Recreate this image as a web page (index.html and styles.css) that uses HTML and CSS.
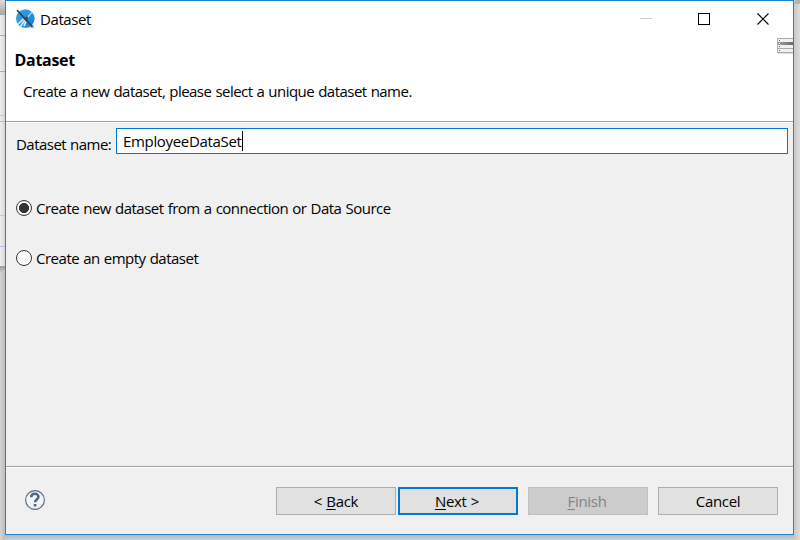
FILE: index.html
```html
<!DOCTYPE html>
<html lang="en">
<head>
<meta charset="utf-8">
<title>Dataset</title>
<link rel="stylesheet" href="styles.css">
</head>
<body>
<main class="window">
  <header class="header">
    <div class="titlebar">
      <svg class="app-icon" width="20" height="20" viewBox="0 0 20 20">
        <defs><linearGradient id="blue" x1="0" y1="0" x2="1" y2="1"><stop offset="0" stop-color="#3ba6ea"/><stop offset="1" stop-color="#0f80d2"/></linearGradient></defs>
        <path d="M13 18.5 19.5 19.5 18 15Z" fill="#c4c0bc"/>
        <circle cx="10.3" cy="9.6" r="9.3" fill="url(#blue)"/>
        <path d="M2.2 16 8.5 9.8M5.2 17.8 9.8 11.2M9 17.3 11 12.4" stroke="#d5eefc" stroke-width="1.7" fill="none"/>
        <path d="M12 9 17 3.2" stroke="#a5daf7" stroke-width="1.2"/>
        <path d="M2 1.2 17.5 17.8" stroke="#3b444c" stroke-width="1.7"/>
        <path d="M8.4 9.6 13 7.3 12.4 11.8Z" fill="#33424e"/>
      </svg>
      <span class="window-title">Dataset</span>
      <svg class="controls" width="132" height="14" viewBox="0 0 132 14" fill="none">
        <path d="M1 6.5h12" stroke="#ccc"/>
        <rect x="59.5" y="1.5" width="11" height="11" stroke="#000"/>
        <path d="M118.5 1.5l11 11m0-11-11 11" stroke="#000" stroke-width="1.1"/>
      </svg>
    </div>
    <h1>Dataset</h1>
    <p>Create a new dataset, please select a unique dataset name.</p>
    <svg class="banner-icon" width="16" height="16" viewBox="0 0 16 16">
      <defs><linearGradient id="row" x1="0" x2="1"><stop stop-color="#a2a2a2"/><stop offset="1" stop-color="#686868"/></linearGradient></defs>
      <path d="M0 0h16v15H0z" fill="#aaa"/>
      <path d="M1 1h15v3H1zM1 7h15v3H1zM1 11h15v3H1z" fill="#f2f2f2"/>
      <path d="M1 4h15v3H1z" fill="url(#row)"/>
      <path d="M2 2h1v1H2zM2 8h1v1H2zM2 12h1v1H2z" fill="#666"/>
      <path d="M2 5h1v1H2z" fill="#fff"/><path d="M1 15h15v1H1z" fill="#ddd"/>
    </svg>
  </header>
  <section class="content">
    <div class="name-row">
      <span class="name-label">Dataset name:</span>
      <div class="field"><span class="value">EmployeeDataSet</span><i class="caret"></i></div>
    </div>
    <div class="option first"><span class="radio checked"></span><span>Create new dataset from a connection or Data Source</span></div>
    <div class="option"><span class="radio"></span><span>Create an empty dataset</span></div>
  </section>
  <footer class="footer">
    <svg class="help" width="20" height="20" viewBox="0 0 20 20" fill="none" stroke="#526786">
      <circle cx="10" cy="10" r="9.4" fill="#f3f4f6" stroke-width="1.1"/>
      <path d="M6.2 7.2C6.2 2.7 13.4 2.8 13.4 6.8c0 2.7-3.3 2.6-3.3 5.5" stroke-width="2.6"/>
      <path d="M8.7 14h2.7v2.5H8.7z" fill="#526786" stroke="none"/>
    </svg>
    <div class="buttons">
      <div class="button"><span>&lt; <u>B</u>ack</span></div>
      <div class="button primary"><span><u>N</u>ext &gt;</span></div>
      <div class="button disabled"><span><u>F</u>inish</span></div>
      <div class="button cancel"><span>Cancel</span></div>
    </div>
  </footer>
</main>
</body>
</html>
```
FILE: styles.css
```css
* { box-sizing: border-box; }
body {
  margin: 0;
  width: 800px;
  height: 540px;
  overflow: hidden;
  padding-left: 5px;
  background:
    linear-gradient(#b5b5b5, #b5b5b5) 795px 0 / 5px 4px no-repeat,
    linear-gradient(90deg, #c8c8c8, #dcdcdc) 794px 0 / 6px 540px no-repeat,
    linear-gradient(#dcdcdc, #a4a4a4) 0 0 / 5px 15px no-repeat,
    linear-gradient(#aaa4d2, #aaa4d2) 0 35px / 5px 1px no-repeat,
    linear-gradient(#aaa4d2, #aaa4d2) 0 71px / 5px 1px no-repeat,
    linear-gradient(#c6c6c6, #c6c6c6) 0 115px / 5px 1px no-repeat,
    linear-gradient(#bdb7e4, #bdb7e4) 0 121px / 5px 1px no-repeat,
    linear-gradient(#c6c6c6, #c6c6c6) 0 215px / 5px 1px no-repeat,
    linear-gradient(#bdb7e4, #bdb7e4) 0 246px / 5px 1px no-repeat,
    linear-gradient(#999, #c8c8c8) 0 266px / 5px 6px no-repeat,
    linear-gradient(90deg, #eee, #d8d8d8) 0 0 / 5px 266px no-repeat,
    linear-gradient(90deg, #d4d4d4, #bcbcbc) 0 266px / 5px 274px no-repeat,
    linear-gradient(#b8b8b8, #d0d0d0) 0 535px / 800px 5px no-repeat,
    #d0d0d0;
  font: 15px/20px "Open Sans", "Noto Sans", sans-serif;
  letter-spacing: -.49px;
  word-spacing: .6px;
  color: #000;
}
.window {
  width: 789px;
  height: 535px;
  border: 1px solid #1883d7;
  background: #f0f0f0;
  display: flex;
  flex-direction: column;
}
.header {
  position: relative;
  height: 122px;
  flex: none;
  background: #fff;
  border-bottom: 1px solid #fff;
  box-shadow: inset 0 -1px #a0a0a0;
}
.titlebar { height: 38px; padding: 0 22px 0 9px; display: flex; align-items: center; }
.app-icon { margin-top: -2px; }
.window-title { margin: -2px 0 0 5px; letter-spacing: -.4px; }
.controls { margin-left: auto; margin-top: -2px; }
h1 { margin: 11px 0 0 8.5px; font-size: 16px; line-height: 20px; font-weight: 700; letter-spacing: -.3px; }
p { margin: 11px 0 0 17px; letter-spacing: -.52px; }
.banner-icon { position: absolute; right: 0; top: 37px; }
.content { flex: 1; padding: 5px 5px 0 10px; }
.name-row { display: flex; justify-content: space-between; }
.name-label { padding-top: 6px; letter-spacing: -.53px; }
.field {
  width: 672px; height: 26px; padding-left: 6px;
  display: flex; align-items: center;
  border: 1px solid #0078d7; background: #fff;
}
.value { margin-top: -1px; letter-spacing: -.33px; }
.caret { width: 1px; height: 20px; background: #000; }
.option { display: flex; align-items: center; height: 20px; margin-top: 30px; }
.option.first { margin-top: 44px; }
.option span:last-child { margin-left: 4px; }
.radio { width: 16px; height: 16px; border: 1px solid #333; border-radius: 50%; background: #fff; }
.checked { background: radial-gradient(circle, #333 4.7px, #fff 5.3px); }
.footer {
  height: 68px; flex: none;
  border-top: 1px solid #a0a0a0; box-shadow: inset 0 1px #fff;
  padding: 20px 15px 0 19px;
  display: flex; justify-content: space-between;
}
.help { margin-top: 3px; }
.buttons { display: flex; gap: 10px; }
.button {
  width: 120px; height: 28px; padding-bottom: 1px;
  display: flex; align-items: center; justify-content: center;
  border: 1px solid #adadad; background: #e1e1e1;
}
.button span { letter-spacing: -.3px; }
.button u { text-underline-offset: 2px; text-decoration-thickness: 1px; }
.primary { margin-left: -8px; border: 2px solid #0078d7; padding-right: 2px; }
.disabled { border-color: #bfbfbf; background: #ccc; color: #838383; padding-right: 2px; }
.cancel span { letter-spacing: -.35px; }
```
